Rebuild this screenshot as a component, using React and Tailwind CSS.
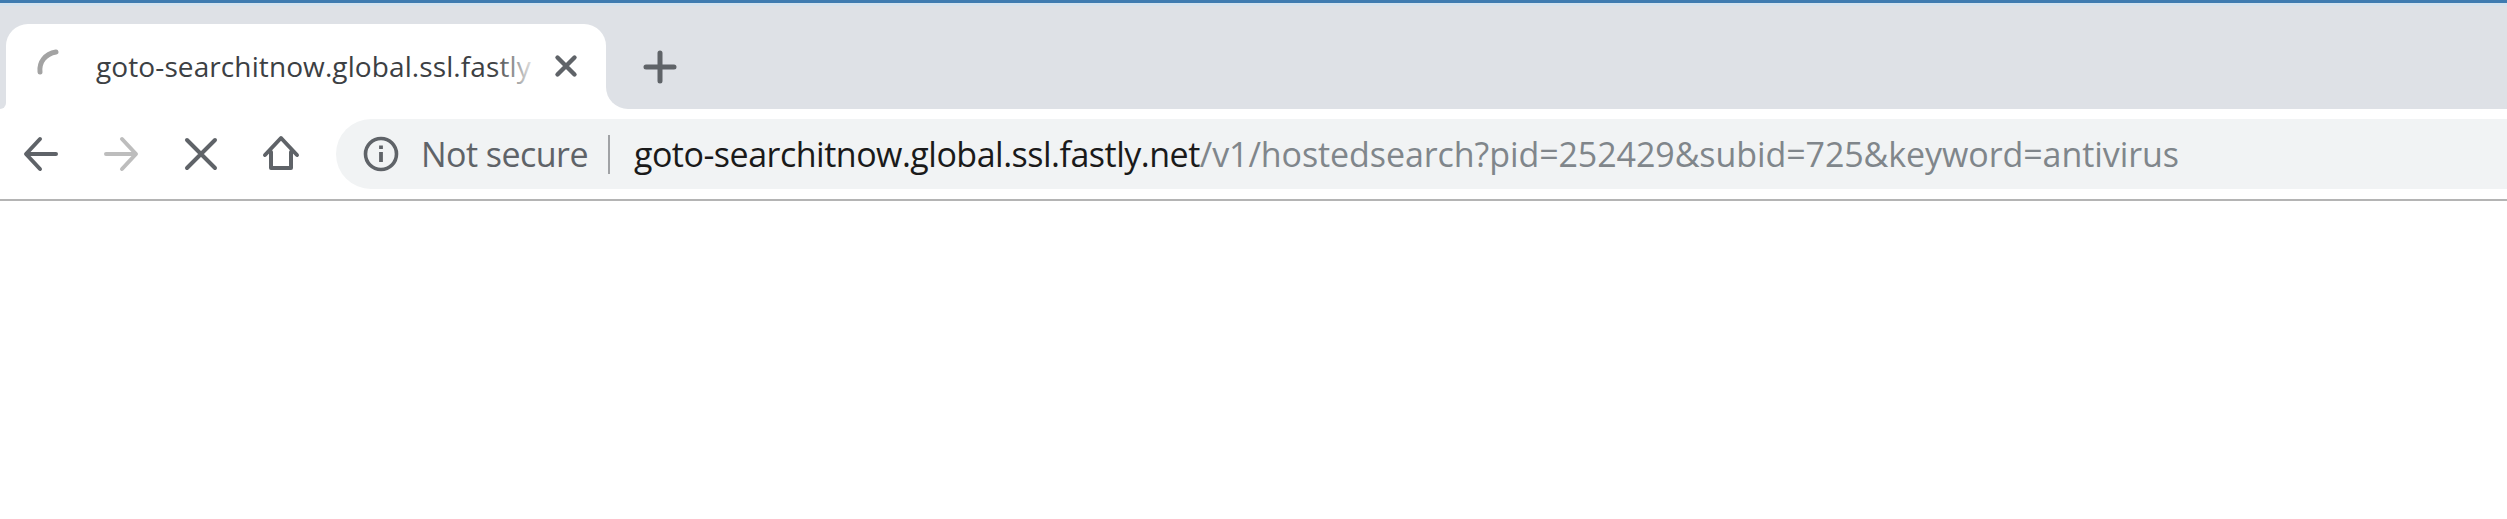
import React from 'react';

const font = { sans: 'font-["Open_Sans","Noto_Sans",sans-serif]' };

function NavIcon({ children, className }) {
  return (
    <svg width="40" height="40" viewBox="0 0 40 40" fill="none" stroke="currentColor" strokeWidth="4" strokeLinecap="round" strokeLinejoin="round" className={className}>
      {children}
    </svg>
  );
}

export default function App() {
  return (
    <div className={`h-[519px] w-full overflow-hidden bg-white ${font.sans}`}>
      {/* window edge */}
      <div className="h-[3px] bg-[#3f7bb0]" />
      <div className="h-[3px] bg-[#d3e2ee]" />

      {/* tab strip */}
      <div className="flex h-[103px] bg-white">
        <div className="w-[6px] rounded-br-[14px] bg-[#dee1e6]" />
        <div className="bg-[#dee1e6] pt-[18px]">
          <div className="relative flex h-[85px] w-[600px] items-center rounded-t-[22px] bg-white pl-[30px]">
            <svg width="30" height="30" viewBox="0 0 30 30" fill="none" className="mb-[7px] shrink-0">
              <path d="M4 24 C3 14 9 6 20 4" stroke="#a3a3a3" strokeWidth="5" strokeLinecap="round" />
            </svg>
            <span className="ml-[30px] mb-[2px] whitespace-nowrap text-[28px] tracking-[0.1px] text-[#3c4043]">
              goto-searchitnow.global.ssl.fastly
            </span>
            <div className="absolute top-0 right-[72px] bottom-0 w-[40px] bg-gradient-to-r from-white/0 to-white/90" />
            <svg width="24" height="24" viewBox="0 0 24 24" fill="none" stroke="#5f6368" strokeWidth="4.4" strokeLinecap="round" className="absolute top-[30px] right-[28px]">
              <path d="M3.5 3.5 L20.5 20.5 M20.5 3.5 L3.5 20.5" />
            </svg>
          </div>
        </div>
        <div className="flex flex-1 items-center rounded-bl-[22px] bg-[#dee1e6] pl-[37px]">
          <svg width="34" height="34" viewBox="0 0 34 34" fill="none" stroke="#5f6368" strokeWidth="5" strokeLinecap="round" className="mt-[18px]">
            <path d="M17 3 V31 M3 17 H31" />
          </svg>
        </div>
      </div>

      {/* toolbar */}
      <div className="flex h-[92px] items-center border-b-2 border-[#b4b4b4]">
        <div className="flex w-[336px] shrink-0 items-center pl-[21px] gap-[40px]">
          <NavIcon className="text-[#5f6368]">
            <path d="M35 20 H6 M19 5 L5 20 L19 35" />
          </NavIcon>
          <NavIcon className="text-[#bdbdbd]">
            <path d="M5 20 H34 M21 5 L35 20 L21 35" />
          </NavIcon>
          <NavIcon className="text-[#5f6368]">
            <path d="M6 6 L34 34 M34 6 L6 34" />
          </NavIcon>
          <NavIcon className="text-[#5f6368]">
            <path d="M10 18 V34 H30 V18 M4 21 L20 4 L36 21" />
          </NavIcon>
        </div>
        <div className="flex h-[70px] flex-1 items-center rounded-l-[35px] bg-[#f1f3f4] pl-[27px]">
          <svg width="36" height="36" viewBox="0 0 36 36" fill="none" stroke="#5f6368" className="shrink-0">
            <circle cx="18" cy="18" r="15.5" strokeWidth="3.6" />
            <path d="M18 16 V26" strokeWidth="3.8" />
            <path d="M18 9.5 V13" strokeWidth="3.8" />
          </svg>
          <span className="ml-[22px] text-[34px] tracking-[-0.55px] text-[#5f6368] whitespace-nowrap">Not secure</span>
          <div className="ml-[20px] h-[39px] w-[2px] bg-[#a0a2a5]" />
          <span className="ml-[24px] text-[34px] tracking-[-0.5px] whitespace-nowrap text-[#1a1a1a]">
            goto-searchitnow.global.ssl.fastly.net
            <span className="tracking-[-0.08px] text-[#80868b]">/v1/hostedsearch?pid=252429&amp;subid=725&amp;keyword=antivirus</span>
          </span>
        </div>
      </div>
    </div>
  );
}
